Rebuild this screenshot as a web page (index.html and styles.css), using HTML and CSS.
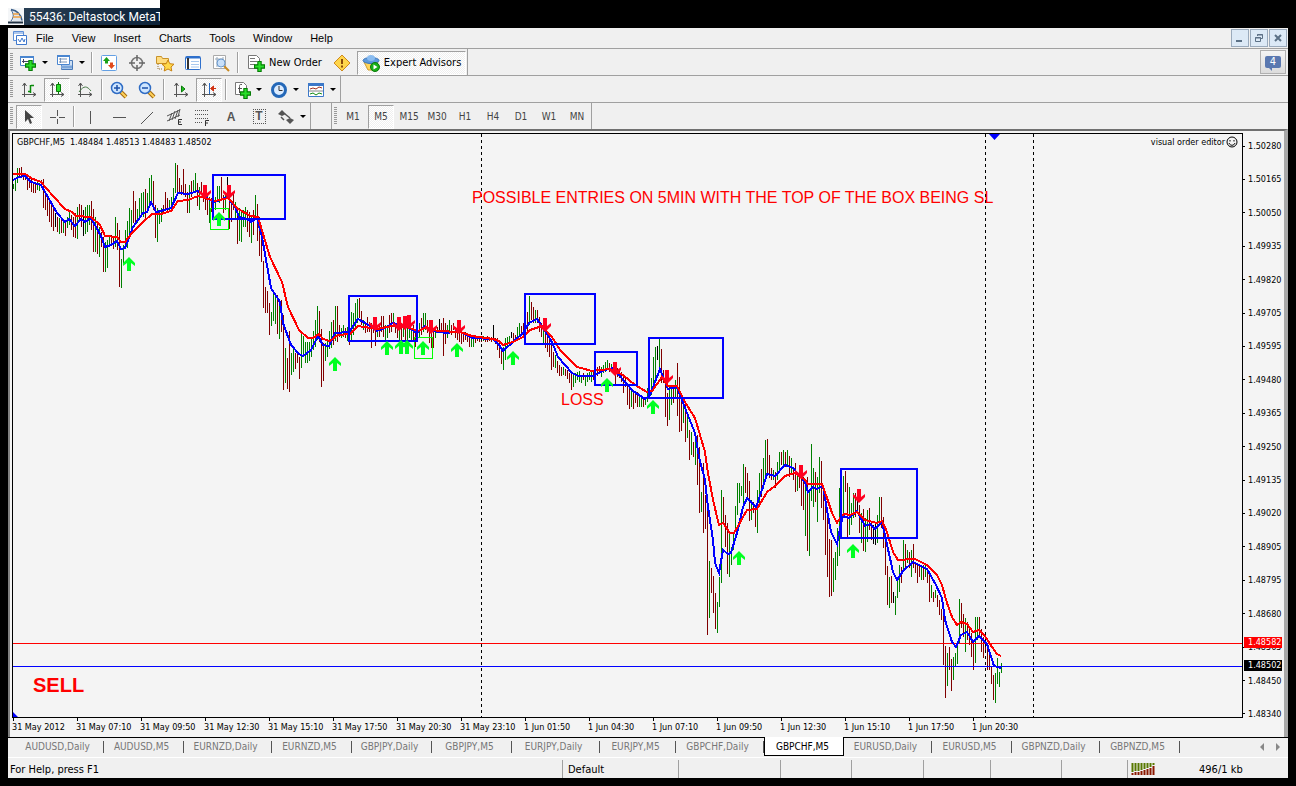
FILE: index.html
```html
<!DOCTYPE html>
<html lang="en">
<head>
  <meta charset="UTF-8">
  <title>55436: Deltastock MetaTrader</title>
  <link rel="stylesheet" href="styles.css">
</head>
<body>
  <!-- icon shapes shared by the toolbars -->
  <svg class="defs" aria-hidden="true">
    <symbol id="plus" viewBox="0 0 10 10"><path d="M3.5.5h3v3h3v3h-3v3h-3v-3h-3v-3h3z" fill="#2be02b" stroke="#067c06"/></symbol>
    <symbol id="axes" viewBox="0 0 16 16"><path d="M3.5 1v14M1 12.5h14M1.5 4l2-3 2 3M12 10.5l3 2-3 2" fill="none" stroke="#555"/></symbol>
    <symbol id="up" viewBox="0 0 12 14"><path d="M6 0l6 6v3l-4-3v8H4V6L0 9V6z" fill="#00ff21"/></symbol>
    <symbol id="down" viewBox="0 0 12 14"><path d="M6 14l6-6V5L8 8V0H4v8L0 5v3z" fill="#ff0020"/></symbol>
    <symbol id="lens" viewBox="0 0 18 18"><path d="M11 11l5 5" stroke="#a56a10" stroke-width="4"/><path d="M11 11l5 5" stroke="#ffd25a" stroke-width="2"/><circle cx="7" cy="7" r="5.5" fill="#cfe6ff" stroke="#2f6cc4" stroke-width="1.5"/></symbol>
  </svg>

  <header class="titlebar">
    <svg class="logo" width="16" height="17" viewBox="0 0 16 17"><path d="M0 0h16v17H0z" fill="#f4f6f8"/><path d="M3 1c7 1 11 5 12 12H5C6 8 5 4 3 1z" fill="#dfe6ee"/><path d="M3 1.500c6 1 10 5 11 11" fill="none" stroke="#3c5f88" stroke-width="1.500"/><path d="M3 2c3 4 3 7 0 11" fill="none" stroke="#3c5f88"/><path d="M5 6h6M5 9h8" stroke="#f0a040" stroke-width="1.500"/><path d="M0 14.500h15" stroke="#234" stroke-width="2"/></svg>
    <span>55436: Deltastock MetaT</span>
  </header>

  <div class="app">
    <nav class="menu">
      <svg width="16" height="16" viewBox="0 0 16 16"><path d="M1.500 1.500h10v9h-10z" fill="#fff" stroke="#5c8fd8"/><path d="M2 3h9" stroke="#5c8fd8"/><path d="M4.500 5.500h10v9h-10z" fill="#fff" stroke="#3f78cc"/><path d="M6 9l2 3 2-4 2 4 1-3" fill="none" stroke="#3f78cc"/></svg>
      <a href="#">File</a><a href="#">View</a><a href="#">Insert</a><a href="#">Charts</a><a href="#">Tools</a><a href="#">Window</a><a href="#">Help</a>
      <div class="window-buttons">
        <button aria-label="Minimize"><svg width="10" height="10"><path d="M1 8h6" stroke="#5c7186" stroke-width="2"/></svg></button>
        <button aria-label="Restore"><svg width="10" height="10"><path d="M3.500 3V1.500h5v4H7M1.500 4.500h5v4h-5zM1 5h6M3 2h6" fill="none" stroke="#5c7186"/></svg></button>
        <button aria-label="Close"><svg width="10" height="10"><path d="M2 2l6 6M8 2L2 8" stroke="#5c7186" stroke-width="2"/></svg></button>
      </div>
    </nav>

    <div class="toolrow">
      <div class="toolbar">
        <button class="tool drop" aria-label="New chart"><svg width="18" height="18"><path d="M1.500 2.500h13v9h-13z" fill="#fff" stroke="#4a86d0"/><path d="M1 3h14" stroke="#4a86d0" stroke-width="2"/><path d="M4.500 5v4M3 7.500h7" stroke="#446"/><use href="#plus" x="6" y="6" width="11" height="11"/></svg></button>
        <button class="tool drop" aria-label="Profiles"><svg width="18" height="18"><path d="M5.500 6.500h11v9h-11z" fill="#cfe0f4" stroke="#4a7ab8"/><path d="M1.500 1.500h12v9h-12z" fill="#fff" stroke="#4a86d0"/><path d="M1 2h13" stroke="#4a86d0" stroke-width="2"/><path d="M3 5h8M3 8h8M4.500 4v5" stroke="#7894b8"/><path d="M5 13h11" stroke="#7ba6da" stroke-width="3"/></svg></button>
        <i class="sep"></i>
        <button class="tool" aria-label="Market Watch"><svg width="18" height="18"><rect x="1.500" y="1.500" width="15" height="15" rx="1" fill="#fff" stroke="#64a0e4"/><path d="M6.500 3l3.500 4H8v2.500H5V7H3z" fill="#18a018"/><path d="M11.500 15l3.500-4h-2V8.500h-3V11H8z" fill="#e04a1c"/></svg></button>
        <button class="tool" aria-label="Data Window"><svg width="18" height="18"><circle cx="9" cy="9" r="5.500" fill="none" stroke="#777" stroke-width="1.500"/><path d="M9 1v6M9 11v6M1 9h6M11 9h6" stroke="#666" stroke-width="1.500"/></svg></button>
        <button class="tool" aria-label="Navigator"><svg width="20" height="18"><path d="M1.500 9.500v-7h5l1 2h6v5z" fill="#ffdc80" stroke="#c8922a"/><path d="M3 10v5h4" fill="none" stroke="#987030" stroke-dasharray="1 1"/><path d="M13 6l1.800 3.700 4.200.5-3 2.800.8 4-3.800-2-3.800 2 .8-4-3-2.800 4.200-.5z" fill="#ffd84a" stroke="#c88212"/></svg></button>
        <button class="tool" aria-label="Terminal"><svg width="18" height="18"><rect x="1.500" y="2.500" width="15" height="13" rx="1" fill="#fff" stroke="#2f70cc"/><path d="M2 3.500h14" stroke="#2f70cc" stroke-width="2"/><path d="M4 4v11" stroke="#333" stroke-width="2"/><path d="M7 7.500h8M7 10.500h8M7 13h8" stroke="#a8c8ee"/></svg></button>
        <button class="tool" aria-label="Strategy Tester"><svg width="18" height="18"><path d="M1.500 1.500h12v13h-12z" fill="#fff" stroke="#aaa"/><path d="M3 5h8M5 3v10M11 3v6" stroke="#98a8b8"/><path d="M12 12l5 5" stroke="#c88a20" stroke-width="2"/><circle cx="9" cy="9" r="4" fill="#c8e0fa" stroke="#6a98cc"/></svg></button>
        <i class="sep"></i>
        <button class="tool wide"><svg width="18" height="18"><path d="M1.500 1.500h8l3 3v10h-11z" fill="#fff" stroke="#777"/><path d="M3 4.500h5M3 7.500h7M3 10.500h5" stroke="#777"/><use href="#plus" x="7" y="7" width="11" height="11"/></svg>New Order</button>
        <button class="tool" aria-label="Alert"><svg width="18" height="18"><path d="M9 1l8 8-8 8-8-8z" fill="#ffd54a" stroke="#cf8a1c"/><path d="M9 5v5M9 11.500v2" stroke="#8a4a08" stroke-width="2"/></svg></button>
        <button class="tool wide pressed"><svg width="18" height="18"><path d="M2 8h14l-4 8H6z" fill="#ffd65c" stroke="#d09a28"/><ellipse cx="9" cy="6.500" rx="8" ry="3" fill="#5c9ade" stroke="#3a74ba"/><ellipse cx="9" cy="4" rx="4" ry="3" fill="#8abcf0"/><circle cx="13" cy="13" r="4.500" fill="#18b018" stroke="#0a7a0a"/><path d="M11.500 10.500l4 2.500-4 2.500z" fill="#fff"/></svg>Expert Advisors</button>
      </div>
    </div>

    <div class="toolrow">
      <div class="toolbar">
        <button class="tool" aria-label="Bar chart"><svg width="16" height="16"><use href="#axes" width="16" height="16"/><path d="M9.500 3v8M10 3.500h3M7 9.500h2" stroke="#0a8a0a" stroke-width="1.500"/></svg></button>
        <button class="tool pressed" aria-label="Candlesticks"><svg width="16" height="16"><use href="#axes" width="16" height="16"/><path d="M9.500 0v12" stroke="#0a7a0a"/><path d="M7.500 2.500h4v7h-4z" fill="#2be02b" stroke="#0a7a0a"/></svg></button>
        <button class="tool" aria-label="Line chart"><svg width="16" height="16"><use href="#axes" width="16" height="16"/><path d="M2 10c5-7 8-6 12-1" fill="none" stroke="#4a7a4a"/></svg></button>
        <i class="sep"></i>
        <button class="tool" aria-label="Zoom in"><svg width="18" height="18"><use href="#lens" width="18" height="18"/><path d="M4 7h6M7 4v6" stroke="#1c50a8" stroke-width="1.500"/></svg></button>
        <button class="tool" aria-label="Zoom out"><svg width="18" height="18"><use href="#lens" width="18" height="18"/><path d="M4 7h6" stroke="#1c50a8" stroke-width="1.500"/></svg></button>
        <i class="sep"></i>
        <button class="tool" aria-label="Auto scroll"><svg width="16" height="16"><use href="#axes" width="16" height="16"/><path d="M8.500 4l3.500 3-3.500 3z" fill="#22c022" stroke="#0a7a0a"/></svg></button>
        <button class="tool pressed" aria-label="Chart shift"><svg width="16" height="16"><use href="#axes" width="16" height="16"/><path d="M8.500 1v11" stroke="#2468c0"/><path d="M9.500 6.500l3-2.500v5zM12 6.500h3" fill="#d03010" stroke="#d03010"/></svg></button>
        <i class="sep"></i>
        <button class="tool drop" aria-label="Indicators"><svg width="18" height="18"><path d="M2.500 1.500h8l3 3v9h-11z" fill="#fff" stroke="#777"/><path d="M9 3.500H7.500c-1 0-1 1-1 2V12M5 7.500h4" fill="none" stroke="#555"/><use href="#plus" x="7" y="7" width="11" height="11"/></svg></button>
        <button class="tool drop" aria-label="Periods"><svg width="18" height="18"><circle cx="9" cy="9" r="6.500" fill="#dcecff" stroke="#2468b8" stroke-width="3"/><path d="M9 5v4.500h3.500" fill="none" stroke="#333"/></svg></button>
        <button class="tool drop" aria-label="Templates"><svg width="18" height="18"><path d="M1.500 2.500h15v13h-15z" fill="#fff" stroke="#3c78c8"/><path d="M1 3.500h16" stroke="#3c78c8" stroke-width="3"/><path d="M3 8l3-1 3 1 3-2 3 1" fill="none" stroke="#a03020"/><path d="M2 10h14" stroke="#888"/><path d="M3 13l3-1 3 2 3-2 3 1" fill="none" stroke="#148a14"/></svg></button>
      </div>
    </div>

    <div class="toolrow last">
      <div class="toolbar">
        <button class="tool pressed" aria-label="Cursor"><svg width="16" height="16"><path d="M4 1v12l3-3 2 5 2-1-2-5h4z" fill="#444"/></svg></button>
        <button class="tool" aria-label="Crosshair"><svg width="16" height="16"><path d="M8.500 1v6M8.500 10v5M1 8.500h6M10 8.500h6" stroke="#555"/></svg></button>
        <i class="sep"></i>
        <button class="tool" aria-label="Vertical line"><svg width="16" height="16"><path d="M7.500 2v13" stroke="#555"/></svg></button>
        <button class="tool" aria-label="Horizontal line"><svg width="16" height="16"><path d="M2 8.500h13" stroke="#555"/></svg></button>
        <button class="tool" aria-label="Trendline"><svg width="16" height="16"><path d="M2 15L14 3" stroke="#555"/></svg></button>
        <button class="tool" aria-label="Channel"><svg width="18" height="18"><path d="M1 8L14 2M1 13L14 7M3 13l3-8M6 12l3-9M9 11l3-9M12 9l2-8" stroke="#555"/><path d="M16 11.500h-3.500v5H16M12.500 14H15" fill="none" stroke="#333"/></svg></button>
        <button class="tool" aria-label="Fibonacci"><svg width="18" height="18"><path d="M1 2.500h14M1 6.500h14M1 10.500h14M1 14.500h8" stroke="#555" stroke-dasharray="1 1"/><path d="M15 12.500h-3.500V18M11.500 15H14" fill="none" stroke="#333"/></svg></button>
        <button class="tool letter">A</button>
        <button class="tool letter"><span class="boxed">T</span></button>
        <button class="tool drop" aria-label="Arrows"><svg width="18" height="18"><path d="M5 2l4 4-4 2-4-2zM13 16l-4-4 4-2 4 2z" fill="#555"/><path d="M4 9l3 3M8 6l5 4" stroke="#555" stroke-width="1.500"/></svg></button>
      </div>
      <div class="toolbar periods">
        <button class="tool">M1</button><button class="tool pressed">M5</button><button class="tool">M15</button><button class="tool">M30</button><button class="tool">H1</button><button class="tool">H4</button><button class="tool">D1</button><button class="tool">W1</button><button class="tool">MN</button>
      </div>
      <button class="chat" aria-label="Messages"><span>4</span></button>
    </div>

    <main class="chart">
      <div class="plot">
        <svg viewBox="13 134 1229 583" preserveAspectRatio="xMinYMin meet" role="img" aria-label="GBPCHF M5 chart">
          <g shape-rendering="crispEdges" fill="none">
            <path id="bars-g" stroke="#008000"/>
            <path id="bars-m" stroke="#800000"/>
            <path id="bars-k" stroke="#000"/>
            <path d="M481.500 134v583M985.500 134v583M1033.500 134v583" stroke="#000" stroke-dasharray="3 3"/>
            <path d="M13 643.500h1229" stroke="#f00"/>
            <path d="M13 666.500h1229" stroke="#00f"/>
            <polyline stroke="#00f" stroke-width="2" points="13,180 19,177 25,176 31,182 41,185 49,199 57,213 65,222 69,219 75,226 81,219 85,222 91,218 101,236 105,247 111,245 117,241 121,249 125,248 133,227 143,213 147,212 151,202 156,212 161,211 171,208 178,193 188,194 198,191 208,199 215,202 227,197 235,207 239,217 247,219 251,222 257,218 262,237 271,288 280,302 283,323 291,345 299,354 303,356 311,350 318,336 323,345 329,346 335,333 349,332 358,319 367,324 377,331 385,328 393,323 407,327 417,333 425,326 433,331 447,333 458,331 472,338 493,339 499,345 503,351 513,342 523,333 529,323 537,319 543,328 552,342 558,357 572,373 578,376 593,376 605,370 613,368 625,382 633,391 645,399 650,395 660,369 668,389 677,387 687,413 695,433 699,457 705,480 708,507 713,540 715,563 719,573 723,550 728,554 731,553 737,533 743,507 747,498 756,507 763,487 767,474 775,476 785,465 793,468 805,482 808,492 813,487 817,489 823,486 827,510 831,532 837,544 839,533 843,516 849,518 857,511 865,526 870,524 875,529 882,522 886,540 893,572 897,580 903,571 913,562 927,569 936,585 942,598 945,620 952,642 956,647 961,635 967,632 973,642 979,636 987,644 994,666 1001,668"/>
            <polyline stroke="#f00" stroke-width="2" points="13,174 25,174 33,179 41,182 53,196 65,209 72,212 76,216 91,217 100,225 105,236 117,237 121,242 125,242 132,233 143,222 152,214 161,214 171,211 178,201 188,200 198,196 208,199 215,201 228,198 238,209 251,216 258,217 270,257 282,282 288,307 299,330 308,338 313,338 319,334 323,339 330,341 338,335 350,334 358,326 377,329 392,326 407,327 418,331 427,327 437,331 460,332 472,336 493,339 499,341 503,345 513,342 523,337 530,330 542,326 552,337 560,350 577,367 592,371 610,369 623,375 635,385 647,392 652,391 662,377 668,386 677,386 685,402 695,418 705,452 708,473 713,500 719,525 723,523 730,533 734,533 747,510 757,509 767,492 775,486 785,476 795,473 805,480 808,484 822,484 827,498 832,513 837,523 842,515 845,514 850,515 857,512 865,520 877,523 882,521 887,532 893,552 898,560 915,559 927,565 937,575 942,585 947,603 952,617 957,625 961,622 967,624 973,632 979,630 985,636 992,647 997,654 1001,656"/>
            <path d="M210.500 208.500h18v21h-18zM414.500 337.500h18v21h-18z" stroke="#0f0"/>
            <path d="M213 175h72v44h-72zM349 296h68v45h-68zM525 294h70v50h-70zM595 352h42v33h-42zM649 338h74v60h-74zM841 469h76v69h-76z" stroke="#00f" stroke-width="2"/>
          </g>
          <g id="arrows"></g>
          <path d="M989 134h11l-5.500 6zM13 712v5h5z" fill="#00f"/>
          <text class="note" x="472" y="203">POSSIBLE ENTRIES ON 5MIN WITH THE TOP OF THE BOX BEING SL</text>
          <text class="note" x="561" y="405">LOSS</text>
          <text class="note sell" x="33" y="692">SELL</text>
        </svg>
        <div class="caption"><span>GBPCHF,M5&nbsp; 1.48484 1.48513 1.48483 1.48502</span>
          <span class="expert">visual order editor<svg width="12" height="12"><circle cx="6" cy="6" r="5" fill="none" stroke="#000"/><path d="M4 4v1.500M8 4v1.500M3 7c1 3 5 3 6 0" fill="none" stroke="#000"/></svg></span></div>
      </div>
      <div class="prices">
        <span>1.50280</span><span>1.50165</span><span>1.50050</span><span>1.49935</span><span>1.49820</span><span>1.49705</span><span>1.49595</span><span>1.49480</span><span>1.49365</span><span>1.49250</span><span>1.49135</span><span>1.49020</span><span>1.48905</span><span>1.48795</span><span>1.48680</span><span>1.48565</span><span>1.48450</span><span>1.48340</span>
        <b class="tag ask">1.48582</b>
        <b class="tag bid">1.48502</b>
      </div>
      <div class="times">
        <span>31 May 2012</span><span>31 May 07:10</span><span>31 May 09:50</span><span>31 May 12:30</span><span>31 May 15:10</span><span>31 May 17:50</span><span>31 May 20:30</span><span>31 May 23:10</span><span>1 Jun 01:50</span><span>1 Jun 04:30</span><span>1 Jun 07:10</span><span>1 Jun 09:50</span><span>1 Jun 12:30</span><span>1 Jun 15:10</span><span>1 Jun 17:50</span><span>1 Jun 20:30</span>
      </div>
    </main>

    <div class="tabs">
      <button class="daily">AUDUSD,Daily</button><button>AUDUSD,M5</button><button class="daily">EURNZD,Daily</button><button>EURNZD,M5</button><button>GBPJPY,Daily</button><button>GBPJPY,M5</button><button class="daily">EURJPY,Daily</button><button class="short">EURJPY,M5</button><button class="daily">GBPCHF,Daily</button><button class="active">GBPCHF,M5</button><button class="daily">EURUSD,Daily</button><button>EURUSD,M5</button><button class="daily">GBPNZD,Daily</button><button>GBPNZD,M5</button>
      <svg class="scroll" width="24" height="10"><path d="M6 1v8L2 5zM18 1v8l4-4z" fill="#888"/></svg>
    </div>

    <footer class="status">
      <span>For Help, press F1</span><span>Default</span><span></span><span></span><span></span><span></span><span></span><span></span>
      <span class="traffic"><svg width="25" height="12"><path d="M1.500 0v9M4.500 0v8M7.500 0v8M10.500 0v7M13.500 0v6M16.500 0v5M19.500 0v4M22.500 0v2" stroke="#587800" stroke-width="2"/><path d="M1.500 12v-2M4.500 12v-3M7.500 12v-3M10.500 12v-4M13.500 12v-5M16.500 12v-6M19.500 12v-7M22.500 12v-9" stroke="#8c1800" stroke-width="2"/></svg>496/1 kb</span>
    </footer>
  </div>
  <script src="chart.js"></script>
</body>
</html>
```
FILE: styles.css
```css
* {
  box-sizing: border-box;
}

body {
  margin: 0;
  height: 100vh;
  display: flex;
  flex-direction: column;
  background: #000;
  color: #000;
  font-family: "DejaVu Sans Condensed", "Noto Sans", sans-serif;
  font-size: 11px;
}

button {
  font: inherit;
  color: inherit;
  background: none;
  border: 0;
  padding: 0;
}

.defs {
  position: absolute;
  width: 0;
  height: 0;
}

/* title strip */
.titlebar {
  width: 160px;
  height: 25px;
  margin-bottom: 3px;
  border-top: 8px solid #fff;
  border-left: 8px solid #fff;
  background: linear-gradient(90deg, #2c4258, #0c2238);
  color: #fff;
  font: 12px/19px Roboto, "Noto Sans", sans-serif;
  display: flex;
  gap: 5px;
  overflow: hidden;
  white-space: nowrap;
  flex: none;
}

.logo {
  flex: none;
}

.app {
  flex: 1;
  min-height: 0;
  margin: 0 8px 8px;
  background: #f0f0f0;
  display: flex;
  flex-direction: column;
}

/* menu */
.menu {
  display: flex;
  align-items: center;
  gap: 18px;
  height: 21px;
  padding-left: 4px;
  border-bottom: 1px solid #a0a0a0;
  font-family: "Liberation Sans", Arial, sans-serif;
}

.menu > svg {
  margin-right: -10px;
}

.menu a {
  color: #000;
  text-decoration: none;
}

.window-buttons {
  margin-left: auto;
  margin-right: 1px;
  display: flex;
  gap: 1px;
}

.window-buttons button {
  width: 18px;
  height: 18px;
  border: 1px solid #9aaabc;
  background: #dce9f6;
  display: grid;
  place-items: center;
}

/* toolbars */
.toolrow {
  display: flex;
  height: 27px;
  border-bottom: 1px solid #a0a0a0;
  position: relative;
}

.toolrow.last {
  height: 26px;
  border-bottom: 0;
}

.toolbar {
  display: flex;
  align-items: center;
  gap: 2px;
  padding: 1px 1px 0 8px;
  border-right: 1px solid #a0a0a0;
  background: repeating-linear-gradient(#999 0 1px, #f0f0f0 1px 2px) 2px 4px / 3px 18px no-repeat;
}

.tool {
  width: 26px;
  height: 24px;
  border: 1px solid transparent;
  display: flex;
  align-items: center;
  justify-content: center;
  flex: none;
}

.tool.drop {
  width: 35px;
  gap: 5px;
}

.drop::after {
  content: "";
  border: 3px solid transparent;
  border-top-color: #000;
  border-bottom: 0;
}

.tool.wide {
  width: auto;
  gap: 4px;
  padding: 0 4px;
}

.tool.pressed {
  border-color: #a0a0a0 #fff #fff #a0a0a0;
  background: repeating-conic-gradient(#fff 0 25%, #efefef 0 50%) 0 0 / 2px 2px;
}

.sep {
  width: 2px;
  height: 21px;
  margin: 0 1px;
  border-left: 1px solid #a0a0a0;
  border-right: 1px solid #fff;
}

.letter {
  color: #555;
  font: bold 12px "Liberation Sans", sans-serif;
}

.boxed {
  width: 13px;
  line-height: 13px;
  border: 1px dotted #555;
}

.periods {
  margin-left: 20px;
  padding-left: 8px;
  border-left: 1px solid #a0a0a0;
  color: #444;
  font-size: 10px;
}

.chat {
  position: absolute;
  right: 2px;
  bottom: 55px;
  width: 26px;
  height: 24px;
  border: 1px solid #b0b0b0;
  background: linear-gradient(#f4f4f4, #dcdcdc);
  display: grid;
  place-items: center;
}

.chat span {
  position: relative;
  width: 16px;
  line-height: 12px;
  background: #5a78b0;
  border-radius: 2px;
  color: #fff;
}

.chat span::after {
  content: "";
  position: absolute;
  left: 4px;
  top: 12px;
  border: 3px solid transparent;
  border-top-color: #5a78b0;
  border-right-width: 0;
}

/* chart window */
.chart {
  flex: 1;
  min-height: 0;
  display: grid;
  grid-template: minmax(0, 1fr) 19px / minmax(0, 1fr) 41px;
  padding: 2px 0 0 2px;
  border-top: 2px solid #707070;
  border-left: 2px solid #808080;
  border-right: 4px solid #a8a8a8;
  background: #f4f4f4;
  font-size: 9px;
}

.plot {
  position: relative;
  border: 1px solid #000;
  min-height: 0;
}

.plot > svg {
  display: block;
  width: 100%;
  height: 100%;
}

.caption {
  position: absolute;
  left: 4px;
  right: 4px;
  top: 2px;
  display: flex;
  justify-content: space-between;
  line-height: 12px;
}

.expert {
  display: flex;
  gap: 1px;
}

.note {
  fill: #f00;
  font: 16px "Liberation Sans", Arial, sans-serif;
}

.note.sell {
  font-size: 20px;
  font-weight: bold;
}

.prices {
  grid-row: span 2;
  position: relative;
  display: flex;
  flex-direction: column;
  justify-content: space-between;
  padding: 7px 0 17px;
  line-height: 12px;
}

.prices span {
  display: flex;
  align-items: center;
  gap: 3px;
}

.prices span::before {
  content: "";
  width: 2px;
  border-top: 1px solid #000;
}

.tag {
  position: absolute;
  left: 1px;
  right: 2px;
  padding-left: 4px;
  line-height: 11px;
  color: #fff;
  font-weight: normal;
}

.ask {
  top: 504px;
  background: #f00;
}

.bid {
  top: 527px;
  background: #000;
}

.times {
  display: flex;
  overflow: hidden;
  line-height: 12px;
}

.times span {
  flex: 0 0 64px;
  white-space: nowrap;
}

.times span::before {
  content: "";
  display: block;
  height: 3px;
  margin-left: 1px;
  border-left: 1px solid #000;
}

/* chart tabs */
.tabs {
  display: flex;
  align-items: flex-start;
  height: 21px;
  padding-left: 8px;
  border-top: 1px solid #000;
  border-bottom: 1px solid #fff;
  color: #777;
  font-size: 10px;
}

.tabs button {
  position: relative;
  flex: none;
  width: 80px;
  height: 17px;
  padding-right: 5px;
  white-space: nowrap;
}

.tabs .daily {
  width: 88px;
}

.tabs .short {
  width: 76px;
}

.tabs button::after {
  content: "";
  position: absolute;
  right: 0;
  top: 3px;
  height: 12px;
  border-right: 1px solid #555;
}

.tabs .active {
  height: 19px;
  margin-top: -1px;
  padding-right: 3px;
  background: #fff;
  color: #000;
  border: 1px solid #000;
  border-top: 0;
}

.tabs .active::after {
  display: none;
}

.scroll {
  margin: 4px 6px 0 auto;
}

/* status bar */
.status {
  display: grid;
  grid-template-columns: 554fr 116fr 102fr 71fr 72fr 67fr 71fr 66fr 161fr;
  height: 20px;
  padding-top: 2px;
}

.status span {
  height: 18px;
  line-height: 19px;
  padding-left: 5px;
  border-left: 1px solid #a0a0a0;
}

.status span:first-child {
  border-left: 0;
  padding-left: 2px;
}

.status .traffic {
  display: flex;
  align-items: center;
  gap: 43px;
  padding-left: 3px;
}
```
FILE: chart.js
```javascript
// one bar every 2px: colour (g up, m down, k doji), high y, low y
const bars = `
g184-189 g180-191 g168-183 m168-178 m167-178 m173-180 m173-180 m176-190 m177-188 m179-192 m182-193 m183-193
g182-190 g183-191 m180-188 m179-208 m192-210 m198-216 m201-222 m203-227 m208-231 k213-227 m217-232 g218-234
m218-233 g219-233 m220-236 g217-228 g210-225 m215-230 m217-237 m213-238 g207-239 m204-222 m205-227 k210-236
g207-234 g205-232 g205-225 m201-230 m209-252 g217-252 m222-254 g227-257 m232-247 m237-272 g242-272 g240-268
g236-246 m235-245 m237-249 g217-247 m223-250 m230-287 g259-288 g245-263 g230-249 g221-248 g208-233 g210-230
m191-223 m201-222 g209-223 g198-220 g193-217 g192-217 m189-218 g193-213 g178-208 g175-203 m181-210 m205-238
g208-242 g210-224 g208-222 m205-214 m192-210 m198-212 g200-210 g197-208 g188-201 g163-193 m165-192 m178-192
m185-195 m169-193 m184-197 m192-213 g185-213 m181-197 g180-193 g173-192 m183-206 g187-210 m182-193 m185-202
m187-210 m195-215 g197-223 m198-212 m200-210 g197-210 g186-202 g186-203 m177-198 m195-213 g192-210 k177-195
m192-229 m202-222 m193-210 g202-218 m207-244 g208-241 g212-242 g210-227 g207-227 m210-232 m212-237 g215-243
m210-235 g195-220 m204-241 m217-256 m225-262 m261-308 m287-313 m291-313 m303-335 g312-326 g294-321 g294-324
m295-334 g304-339 m300-332 m315-390 g348-383 m358-389 m331-392 g353-375 g348-372 m353-369 m353-363 m357-379
g333-368 g336-355 g342-363 g342-363 g342-361 g337-357 g331-350 g320-347 g306-340 m311-342 m329-387 m343-381
g343-361 g339-357 g331-349 g322-348 m320-345 g306-341 m306-342 m325-337 g328-338 g325-337 m328-338 g327-341
m328-345 g312-341 g313-335 g303-330 g299-323 m298-318 m311-325 g320-330 m322-333 m317-332 m322-332 m323-348
m320-333 m327-346 g329-337 m325-337 m316-332 m316-337 g325-340 g325-338 m315-333 m313-332 g313-327 m323-333
m323-338 g325-345 m323-340 g323-337 m323-345 g316-340 g320-338 g328-342 m325-342 m330-347 g328-342 g323-337
m318-335 g313-332 g313-330 m320-333 m325-343 m327-348 m332-348 g327-338 m327-333 k319-332 m323-333 m318-356
m323-344 g325-338 g320-333 m325-335 m323-330 m327-338 m328-340 m325-342 m328-344 m332-342 m332-340 m333-342
m335-347 g337-347 g338-347 m337-343 m337-341 m336-342 m337-342 g336-341 m337-342 m336-342 m337-341 m337-342
k325-341 m338-344 m338-350 m340-358 m348-364 g347-370 g338-360 g337-347 g336-344 k332-338 m333-340 m335-342
g327-338 g323-337 m326-335 m323-337 m320-335 m312-332 g296-325 m302-320 m307-323 g310-323 m310-323 m317-332
m323-337 g328-344 m328-348 m332-352 m338-357 m345-370 m352-367 g355-368 m361-373 m365-376 m367-376 g367-375
m369-376 m370-379 m373-383 m374-390 g375-387 g373-383 g372-380 g371-382 g375-383 m373-380 g375-386 g373-382
g372-380 g372-382 m372-380 m367-377 m367-376 m366-373 g367-377 g365-373 g362-372 g360-370 m363-372 g364-372
g362-373 m364-384 m368-377 m370-378 m372-382 m375-393 m377-387 m385-405 m387-409 g388-407 m390-409 m392-403
m392-407 g395-407 g395-407 m398-407 g397-405 g388-402 g382-397 g378-395 g357-388 g347-380 k346-360 g338-372
m349-383 m370-383 m380-417 m393-426 g387-420 g385-405 m387-403 g380-397 m363-416 m377-432 m395-431 g403-423
m405-442 g413-438 m430-460 g432-455 m442-457 g442-465 m435-485 m447-513 g492-512 m463-533 m495-529 m503-635
g561-618 m568-593 m576-613 m593-629 g602-633 g577-607 g490-583 m497-525 m515-547 m523-574 g533-577 g547-565
g532-550 g506-530 g483-515 g483-503 g486-496 g464-503 m467-493 m473-498 m481-521 g500-520 m502-513 m505-527
g490-533 g473-507 m469-497 g458-487 g440-480 m439-475 m455-478 m468-480 g470-480 m472-488 g462-480 g452-472
m452-465 g450-467 m452-467 g450-467 m456-477 g458-473 m467-480 m463-492 g473-491 m475-488 m478-506 m477-510
g480-536 m477-551 g492-556 g444-501 g468-507 m472-502 g477-522 g457-493 m461-508 m487-520 m493-555 m510-577
m539-597 m540-596 g558-592 g552-580 g528-566 g488-556 g483-533 g476-517 m471-492 m483-537 g487-535 g503-525
g493-518 m493-517 k492-512 m505-533 g513-543 m509-551 g518-552 g510-542 m508-530 m523-540 k525-544 k522-545
g515-543 g497-525 m497-528 m517-548 m537-575 m566-605 g577-608 m576-603 k592-603 g596-615 g577-598 g565-592
m567-583 g540-570 m544-568 g550-563 m552-568 g550-577 m544-568 m562-573 m563-583 m565-577 g567-580 m565-580
g565-577 m568-583 m573-602 g585-598 m592-602 g590-598 m595-607 m600-615 m609-620 m603-665 m646-698 g653-686
m647-670 m659-691 g657-680 g653-667 g643-664 g599-644 m603-628 m614-637 g618-652 m622-640 m627-645 m633-657
m640-670 g617-663 g617-640 m617-637 m629-652 m637-658 m640-653 m643-670 m653-670 m667-684 m675-700 g673-703
g658-684 g672-687 g663-673
`.trim().split(/\s+/);

const firstX = 13;
const step = 2;
const paths = { g: "", m: "", k: "" };

bars.forEach((bar, i) => {
  const x = firstX + i * step + 0.5;
  const [high, low] = bar.slice(1).split("-");
  paths[bar[0]] += `M${x} ${high}V${low}`;
});

for (const key in paths) {
  document.getElementById("bars-" + key).setAttribute("d", paths[key]);
}

// signal arrows: centre x, top y
const arrows = {
  up: [[129, 257], [219, 212], [335, 357], [387, 341], [401, 340], [407, 340], [423, 341], [457, 343],
       [513, 351], [607, 378], [653, 400], [739, 551], [853, 544]],
  down: [[205, 185], [229, 185], [375, 317], [399, 317], [405, 316], [409, 315], [431, 320], [459, 320],
         [545, 318], [615, 362], [667, 370], [801, 465], [859, 489]]
};

let marks = "";
for (const dir in arrows) {
  for (const [x, y] of arrows[dir]) {
    marks += `<use href="#${dir}" x="${x - 6}" y="${y}" width="12" height="14"/>`;
  }
}
document.getElementById("arrows").innerHTML = marks;
```
